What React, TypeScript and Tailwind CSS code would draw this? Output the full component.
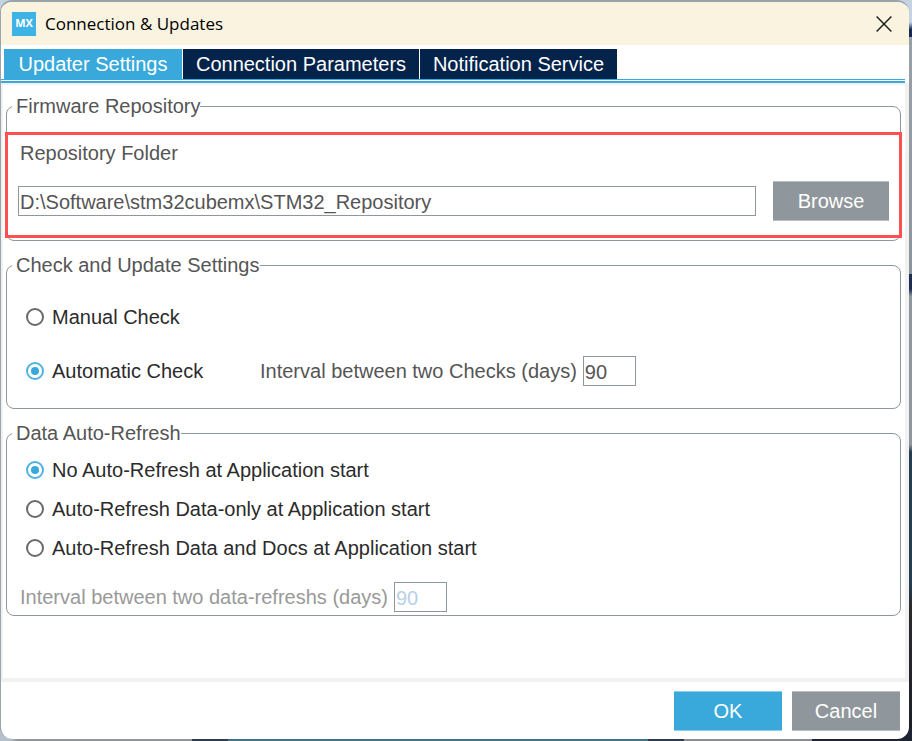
import { useState } from 'react'
import type { ReactNode } from 'react'
import clsx from 'clsx'

const tabs = [
  { id: 'updater', label: 'Updater Settings', width: 'w-[178px]' },
  { id: 'connection', label: 'Connection Parameters', width: 'w-[236px]' },
  { id: 'notification', label: 'Notification Service', width: 'w-[197px]' },
]

const refreshOptions = [
  { id: 'none', label: 'No Auto-Refresh at Application start' },
  { id: 'data', label: 'Auto-Refresh Data-only at Application start' },
  { id: 'docs', label: 'Auto-Refresh Data and Docs at Application start' },
]

interface GroupProps {
  title: string
  className?: string
  children: ReactNode
}

function Group({ title, className, children }: GroupProps) {
  return (
    <fieldset className={clsx('min-w-0 rounded-lg border border-[#8f979c] px-[11px]', className)}>
      <legend className="-ml-1.5 bg-white pl-1 leading-6">{title}</legend>
      {children}
    </fieldset>
  )
}

interface RadioProps {
  name: string
  label: string
  checked: boolean
  onChange: () => void
}

function Radio({ name, label, checked, onChange }: RadioProps) {
  return (
    <label className="flex items-center gap-2 pl-2 leading-6 text-[#2b2b2b]">
      <input
        type="radio"
        name={name}
        checked={checked}
        onChange={onChange}
        className="size-[18px] shrink-0 appearance-none rounded-full border-2 border-[#6a6a6a] p-[3px] checked:border-[#4fb2e0] checked:bg-[#39a9dc] checked:bg-clip-content"
      />
      {label}
    </label>
  )
}

export default function App() {
  const [activeTab, setActiveTab] = useState('updater')
  const [folder, setFolder] = useState('D:\\Software\\stm32cubemx\\STM32_Repository')
  const [checkMode, setCheckMode] = useState('auto')
  const [checkDays, setCheckDays] = useState('90')
  const [refreshMode, setRefreshMode] = useState('none')
  const [refreshDays, setRefreshDays] = useState('90')

  return (
    <div className="flex min-h-screen flex-col bg-[linear-gradient(to_right,#b4c0cc_1%,#8f979c_2%,#8f979c_21%,#2f3b50_21%,#2f3b50_25%,#457089_25%,#457089_71%,#2f3b50_71%,#2f3b50_75%,#8b8d90_75%,#8b8d90_89%,#1f2433_89%),linear-gradient(to_bottom,#c5d3e0_3%,#14294d_4%,#14294d_5%,#98a1a8_5%,#8b959c_37%,#1e2c50_37%,#1e2c50_39%,#8f979c_40%,#8f979c_60%,#263c50_61%,#263c50_79%,#2a2a2c_82%,#1c1e28_100%)] bg-[size:100%_12px,100%_100%] bg-[position:bottom,top] bg-no-repeat pr-[3px] pb-[2px] font-['Liberation_Sans',Arial,sans-serif] text-[20px] text-[#555555]">
      <div className="flex flex-1 flex-col overflow-hidden rounded-xl border-t-2 border-l border-[#9aa4ad] bg-white">
        {/* Title bar */}
        <header className="flex h-[43px] items-center bg-[#f9f3df] pr-4 pl-[11px]">
          <span className="flex size-6 items-center justify-center bg-[#3db3e6] font-['Open_Sans',sans-serif] text-[11px] font-bold text-white">
            MX
          </span>
          <h1 className="ml-[9px] flex-1 font-['Open_Sans','Noto_Sans',sans-serif] text-[17px] text-black">
            Connection &amp; Updates
          </h1>
          <button aria-label="Close" className="p-px text-[#1a1a1a]">
            <svg viewBox="0 0 16 16" className="size-4" fill="none" stroke="currentColor" strokeWidth="1.4">
              <path d="M.6.6l14.8 14.8M15.4.6L.6 15.4" />
            </svg>
          </button>
        </header>

        {/* Tabs */}
        <nav className="mr-1 flex gap-px border-b border-[#39a9dc] pt-1 pl-[3px]">
          {tabs.map(tab => (
            <button
              key={tab.id}
              onClick={() => setActiveTab(tab.id)}
              className={clsx(
                'h-[30px] whitespace-nowrap text-white',
                tab.width,
                activeTab === tab.id ? 'bg-[#39a9dc]' : 'bg-[#03234b]'
              )}
            >
              {tab.label}
            </button>
          ))}
        </nav>
        <div className="mt-px mr-1 h-0.5 bg-[#39a9dc]" />

        {/* Settings panel */}
        <main className="flex flex-1 flex-col gap-3 border-t-2 border-r-4 border-b-4 border-l-2 border-[#f1f1f2] pt-[9px] pr-1 pl-[3px]">
          <Group title="Firmware Repository" className="pt-[23px] pb-[19px]">
            <div className="relative">
              <label htmlFor="folder" className="block pl-0.5 leading-6">
                Repository Folder
              </label>
              <div className="mt-4 flex items-center gap-[17px]">
                <input
                  id="folder"
                  value={folder}
                  onChange={e => setFolder(e.target.value)}
                  className="h-[30px] min-w-0 flex-1 border border-[#8f979c] pt-0.5 pl-px"
                />
                <button className="h-10 w-[116px] border-y border-[#b9bec2] bg-[#8f979c] text-white">Browse</button>
              </div>
              <div className="pointer-events-none absolute -inset-x-[13px] -top-[9px] -bottom-[17px] border-3 border-[#fb5151]" />
            </div>
          </Group>

          <Group title="Check and Update Settings" className="pt-7 pb-[22px]">
            <Radio
              name="check"
              label="Manual Check"
              checked={checkMode === 'manual'}
              onChange={() => setCheckMode('manual')}
            />
            <div className="mt-[27px] flex items-center">
              <div className="w-[242px]">
                <Radio
                  name="check"
                  label="Automatic Check"
                  checked={checkMode === 'auto'}
                  onChange={() => setCheckMode('auto')}
                />
              </div>
              <label className="flex items-center gap-1.5">
                Interval between two Checks (days)
                <input
                  value={checkDays}
                  onChange={e => setCheckDays(e.target.value)}
                  disabled={checkMode !== 'auto'}
                  className="h-[30px] w-[53px] border border-[#8f979c] pt-0.5 pl-px disabled:text-[#b8d0ea]"
                />
              </label>
            </div>
          </Group>

          <Group title="Data Auto-Refresh" className="pt-[13px] pb-[3px]">
            <div className="flex flex-col gap-[15px]">
              {refreshOptions.map(option => (
                <Radio
                  key={option.id}
                  name="refresh"
                  label={option.label}
                  checked={refreshMode === option.id}
                  onChange={() => setRefreshMode(option.id)}
                />
              ))}
            </div>
            <label className={clsx('mt-[22px] flex items-center gap-1.5 pl-0.5', refreshMode === 'none' && 'text-[#999999]')}>
              Interval between two data-refreshs (days)
              <input
                value={refreshDays}
                onChange={e => setRefreshDays(e.target.value)}
                disabled={refreshMode === 'none'}
                className="h-[30px] w-[53px] border border-[#8f979c] pt-0.5 pl-px disabled:text-[#b8d0ea]"
              />
            </label>
          </Group>
        </main>

        {/* Footer */}
        <footer className="flex justify-end gap-2.5 pt-[9px] pr-[9px] pb-2">
          <button className="h-10 w-[108px] border-y border-[#8fccea] bg-[#39a9dc] text-white">OK</button>
          <button className="h-10 w-[108px] border-y border-[#b9bec2] bg-[#8f979c] text-white">Cancel</button>
        </footer>
      </div>
    </div>
  )
}
